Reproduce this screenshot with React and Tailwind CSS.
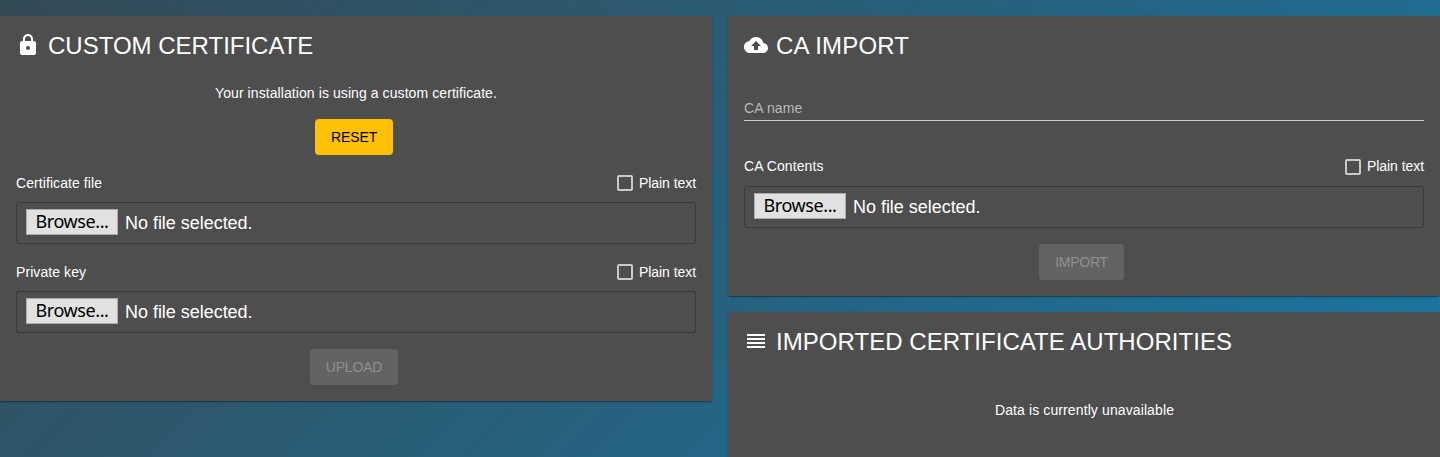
import React from "react";

function Card({ className = "", titleClass = "", icon, title, children }) {
  return (
    <section
      className={`rounded-xs bg-[#4e4e4e] px-4 shadow-[0_2px_1px_-1px_rgba(0,0,0,0.2),0_1px_1px_rgba(0,0,0,0.14),0_1px_3px_rgba(0,0,0,0.12)] ${className}`}
    >
      <h2 className="flex h-[60px] items-center gap-2 text-[24px] leading-8 font-normal uppercase">
        <svg viewBox="0 0 24 24" className="mb-0.5 h-6 w-6 shrink-0 fill-white">
          <path d={icon} />
        </svg>
        <span className={titleClass}>{title}</span>
      </h2>
      {children}
    </section>
  );
}

function FileField({ label, checkboxClass = "", boxClass = "mt-[9px]" }) {
  return (
    <div>
      <div className="flex h-5 items-center justify-between">
        <span className="tracking-[0.08px]">{label}</span>
        <label className="flex items-center gap-1.5">
          <span className={`h-4 w-4 rounded-[2px] border-2 border-[#cacaca] ${checkboxClass}`} />
          <span className="tracking-[-0.06px]">Plain text</span>
        </label>
      </div>
      <div
        className={`flex h-[42px] items-center rounded-[3px] border border-[#3a3a3a] pb-0.5 pl-[9px] text-[18px] ${boxClass}`}
      >
        <button className="h-[26px] w-[92px] border border-[#adadad] bg-[#e1e1e1] pb-0.5 text-center font-['Noto_Sans',sans-serif] text-[18px] leading-[22px] tracking-[-0.4px] text-black">
          Browse...
        </button>
        <span className="ml-[7px] pt-0.5 tracking-[-0.03px]">No file selected.</span>
      </div>
    </div>
  );
}

const LOCK =
  "M18 8h-1V6c0-2.76-2.24-5-5-5S7 3.24 7 6v2H6c-1.1 0-2 .9-2 2v10c0 1.1.9 2 2 2h12c1.1 0 2-.9 2-2V10c0-1.1-.9-2-2-2zm-6 9c-1.1 0-2-.9-2-2s.9-2 2-2 2 .9 2 2-.9 2-2 2zm3.1-9H8.9V6c0-1.71 1.39-3.1 3.1-3.1 1.71 0 3.1 1.39 3.1 3.1v2z";
const CLOUD =
  "M19.35 10.04C18.67 6.59 15.64 4 12 4 9.11 4 6.6 5.64 5.35 8.04 2.34 8.36 0 10.91 0 14c0 3.31 2.69 6 6 6h13c2.76 0 5-2.24 5-5 0-2.64-2.05-4.78-4.65-4.96zM14 13v4h-4v-4H7l5-5 5 5h-3z";
const LINES = "M3 17h18v2H3v-2zm0-4h18v2H3v-2zm0-4h18v2H3V9zm0-4h18v2H3V5z";

export default function App() {
  return (
    <main className="flex h-[457px] w-[1440px] items-start gap-4 overflow-hidden bg-[linear-gradient(135deg,#344a55_0%,#27607c_50%,#1b77a4_100%)] pt-4 font-['Liberation_Sans',Arial,sans-serif] text-[14px] leading-5 text-white">
      <Card className="h-[385px] w-[712px]" icon={LOCK} title="Custom certificate">
        <p className="mt-[7px] text-center tracking-[0.08px]">
          Your installation is using a custom certificate.
        </p>
        <div className="mt-4 flex justify-center pr-1">
          <button className="h-9 w-[78px] rounded-[4px] bg-[#ffc107] tracking-[-0.1px] text-black">
            RESET
          </button>
        </div>
        <div className="mt-[18px] flex flex-col gap-[18px]">
          <FileField label="Certificate file" />
          <FileField label="Private key" />
        </div>
        <div className="mt-4 flex justify-center pr-1">
          <button className="h-9 w-[88px] rounded-[4px] bg-[#636363] tracking-[-0.2px] text-[#8f8f8f]">
            UPLOAD
          </button>
        </div>
      </Card>
      <div className="flex w-[712px] flex-col gap-4">
        <Card className="h-[280px]" titleClass="tracking-[0.18px]" icon={CLOUD} title="CA import">
          <div className="mt-[22px] h-[23px] border-b border-[#cacaca] tracking-[0.12px] text-[#b8b8b8]">
            CA name
          </div>
          <div className="mt-[35px]">
            <FileField label="CA Contents" checkboxClass="mt-0.5" boxClass="mt-[10px]" />
          </div>
          <div className="mt-4 flex justify-center pr-[5px]">
            <button className="h-9 w-[85px] rounded-[4px] bg-[#636363] tracking-[-0.25px] text-[#8f8f8f]">
              IMPORT
            </button>
          </div>
        </Card>
        <Card
          className="h-[180px]"
          titleClass="tracking-[0.04px]"
          icon={LINES}
          title="Imported certificate authorities"
        >
          <p className="mt-[28px] pl-px text-center tracking-[0.11px]">
            Data is currently unavailable
          </p>
        </Card>
      </div>
    </main>
  );
}
